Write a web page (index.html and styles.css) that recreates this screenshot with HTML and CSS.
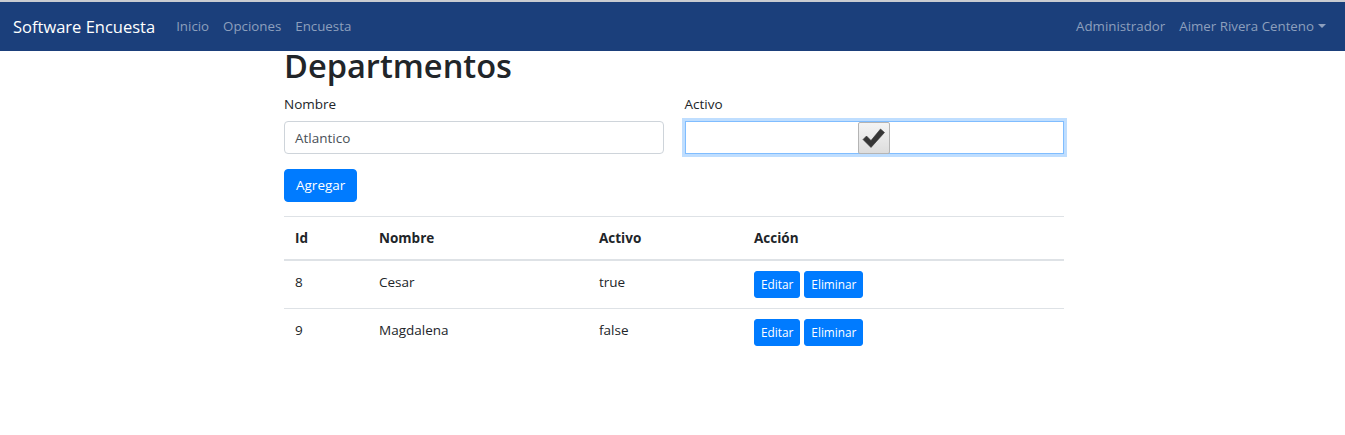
FILE: index.html
```html
<!DOCTYPE html>
<html lang="es">
<head>
<meta charset="utf-8">
<title>Departmentos</title>
<link rel="stylesheet" href="styles.css">
</head>
<body>
<nav class="navbar">
  <a class="brand" href="#">Software Encuesta</a>
  <ul class="nav-links">
    <li><a href="#">Inicio</a></li>
    <li><a href="#">Opciones</a></li>
    <li><a href="#">Encuesta</a></li>
  </ul>
  <ul class="nav-links nav-right">
    <li><a href="#">Administrador</a></li>
    <li><a href="#" class="dropdown">Aimer Rivera Centeno<span class="caret"></span></a></li>
  </ul>
</nav>
<main class="container">
  <h1 class="title">Departmentos</h1>
  <form class="form">
    <div class="form-row">
      <div class="form-group">
        <label class="label">Nombre</label>
        <div class="input">Atlantico</div>
      </div>
      <div class="form-group">
        <label class="label">Activo</label>
        <div class="input input-focus">
          <span class="checkbox">
            <svg width="24" height="22" viewBox="0 0 24 22"><path d="M1 12.5 L4.5 9 L9 13.5 L18.5 2 L22.5 5.5 L9 20.5 Z" fill="#363636" stroke="#363636" stroke-width="0.6" stroke-linejoin="round"/></svg>
          </span>
        </div>
      </div>
    </div>
    <button type="button" class="btn">Agregar</button>
  </form>
  <table class="table">
    <thead>
      <tr><th class="c-id">Id</th><th class="c-nombre">Nombre</th><th class="c-activo">Activo</th><th>Acción</th></tr>
    </thead>
    <tbody>
      <tr><td>8</td><td>Cesar</td><td>true</td><td><div class="actions"><button type="button" class="btn btn-sm">Editar</button><button type="button" class="btn btn-sm">Eliminar</button></div></td></tr>
      <tr><td>9</td><td>Magdalena</td><td>false</td><td><div class="actions"><button type="button" class="btn btn-sm">Editar</button><button type="button" class="btn btn-sm">Eliminar</button></div></td></tr>
    </tbody>
  </table>
</main>
</body>
</html>
```
FILE: styles.css
```css
* { box-sizing: border-box; }
html, body { margin: 0; padding: 0; }
body {
  font-family: "Open Sans", "Noto Sans", sans-serif;
  font-size: 14px;
  line-height: 1.5;
  color: #212529;
  background: #fff;
  border-top: 2px solid #c9ccd1;
}
a { text-decoration: none; }

.navbar {
  height: 49px;
  background: #1b3f7b;
  display: flex;
  align-items: center;
  padding: 1px 13px 0;
}
.brand {
  color: #fff;
  font-size: 16.5px;
  margin-right: 14px;
  white-space: nowrap;
}
.nav-links {
  list-style: none;
  margin: 0;
  padding: 0;
  display: flex;
}
.nav-links a {
  display: block;
  padding: 7px 7px;
  color: #8d9fbd;
  font-size: 13.3px;
  white-space: nowrap;
}
.nav-right { margin-left: auto; }
.nav-right li:last-child a { padding-right: 6px; }
.caret {
  display: inline-block;
  margin-left: 4px;
  vertical-align: 3px;
  border-top: 4px solid #8d9fbd;
  border-left: 4px solid transparent;
  border-right: 4px solid transparent;
}

.container {
  width: 780px;
  margin: 0 auto;
  padding-left: 3px;
  box-sizing: content-box;
}
.title {
  margin: 0;
  font-size: 32.6px;
  font-weight: 600;
  line-height: 30px;
  color: #212529;
}
.form { margin: 13px 0 14px; }
.form-row {
  display: grid;
  grid-template-columns: 1fr 1fr;
  column-gap: 21px;
}
.form-group { margin-bottom: 14px; }
.label {
  display: block;
  margin-bottom: 7px;
  font-size: 13.5px;
  color: #212529;
}
.input {
  height: 33px;
  border: 1px solid #ced4da;
  border-radius: 4px;
  padding: 0 10px;
  display: flex;
  align-items: center;
  font-size: 13.5px;
  color: #495057;
}
.input-focus {
  border-color: #80bdff;
  border-radius: 0;
  box-shadow: 0 0 0 3px #bfdeff;
  justify-content: center;
  overflow: visible;
}
.checkbox {
  width: 32px;
  height: 32px;
  flex: none;
  display: flex;
  align-items: center;
  justify-content: center;
  border: 1px solid #b4b4b4;
  border-radius: 2px;
  background: linear-gradient(#f4f4f4, #dddddd);
}

.btn {
  font-family: inherit;
  font-size: 13.5px;
  line-height: 21px;
  color: #fff;
  background: #007bff;
  border: 1px solid #007bff;
  border-radius: 4px;
  padding: 5px 11px;
  cursor: pointer;
}
.form .btn { margin-top: 1px; }
.btn-sm {
  font-size: 11.8px;
  line-height: 18px;
  padding: 3.5px 6px;
  border-radius: 3px;
}
.actions { display: flex; gap: 4px; }

.table {
  width: 100%;
  border-collapse: collapse;
}
.table th, .table td {
  text-align: left;
  vertical-align: top;
  padding: 10.5px 11px;
  border-top: 1px solid #dee2e6;
  font-size: 13.5px;
  line-height: 21px;
}
.table thead th {
  font-weight: 700;
  border-bottom: 2px solid #dee2e6;
}
.table tbody tr:first-child td { border-top: 0; }
.table tbody td:last-child { padding-top: 9.5px; padding-bottom: 10.5px; }
.c-id { width: 84px; }
.c-nombre { width: 220px; }
.c-activo { width: 155px; }
```
